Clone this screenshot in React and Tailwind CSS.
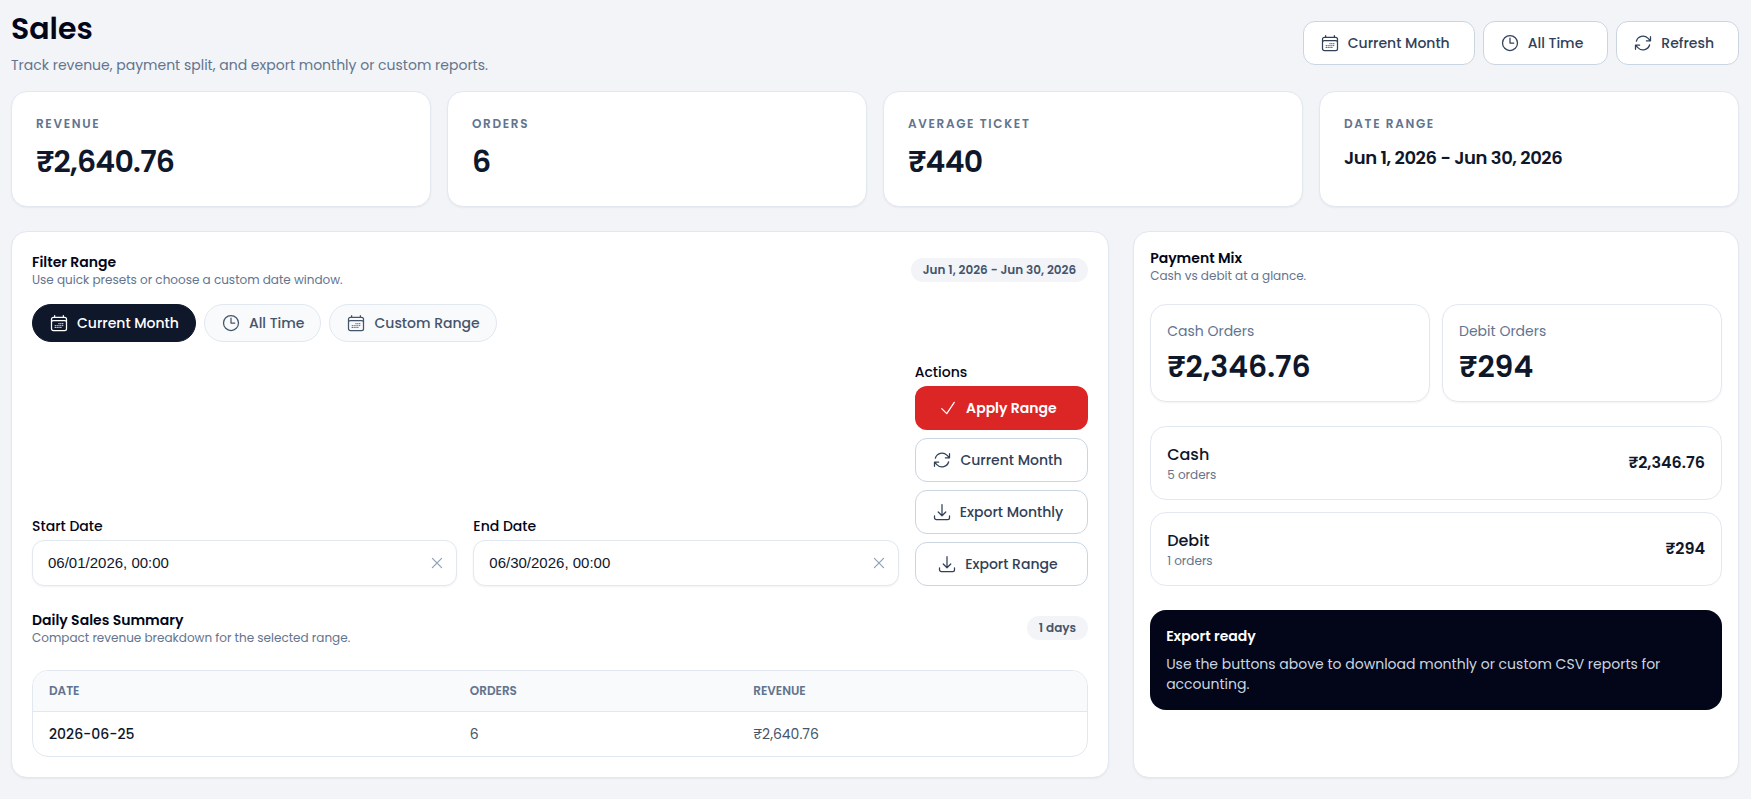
import { useId, useState } from 'react';

const RANGE_LABEL = 'Jun 1, 2026 - Jun 30, 2026';

const STATS = [
  { label: 'Revenue', value: '₹2,640.76' },
  { label: 'Orders', value: '6' },
  { label: 'Average ticket', value: '₹440' },
  { label: 'Date range', value: RANGE_LABEL, small: true },
];

const PAYMENTS = [
  { id: 'cash', label: 'Cash', orders: 5, total: '₹2,346.76' },
  { id: 'debit', label: 'Debit', orders: 1, total: '₹294' },
];

const DAILY = [{ date: '2026-06-25', orders: 6, revenue: '₹2,640.76' }];

const Svg = ({ d }) => (
  <svg viewBox="0 0 24 24" fill="none" stroke="currentColor" strokeWidth="1.5" strokeLinecap="round" strokeLinejoin="round"
    className="size-5 shrink-0" aria-hidden="true">
    <path d={d} />
  </svg>
);

const CalendarIcon = () => (
  <Svg d="M6.75 3v2.25M17.25 3v2.25M3 18.75V7.5a2.25 2.25 0 0 1 2.25-2.25h13.5A2.25 2.25 0 0 1 21 7.5v11.25m-18 0A2.25 2.25 0 0 0 5.25 21h13.5A2.25 2.25 0 0 0 21 18.75m-18 0v-7.5A2.25 2.25 0 0 1 5.25 9h13.5A2.25 2.25 0 0 1 21 11.25v7.5m-9-6h.008v.008H12v-.008ZM12 15h.008v.008H12V15Zm0 2.25h.008v.008H12v-.008ZM9.75 15h.008v.008H9.75V15Zm0 2.25h.008v.008H9.75v-.008ZM7.5 15h.008v.008H7.5V15Zm0 2.25h.008v.008H7.5v-.008Zm6.75-4.5h.008v.008h-.008v-.008Zm0 2.25h.008v.008h-.008V15Zm0 2.25h.008v.008h-.008v-.008Zm2.25-4.5h.008v.008H16.5v-.008Zm0 2.25h.008v.008H16.5V15Z" />
);
const ClockIcon = () => <Svg d="M12 6v6h4.5m4.5 0a9 9 0 1 1-18 0 9 9 0 0 1 18 0Z" />;
const RefreshIcon = () => (
  <Svg d="M16.023 9.348h4.992v-.001M2.985 19.644v-4.992m0 0h4.992m-4.993 0 3.181 3.183a8.25 8.25 0 0 0 13.803-3.7M4.031 9.865a8.25 8.25 0 0 1 13.803-3.7l3.181 3.182m0-4.991v4.99" />
);
const CheckIcon = () => <Svg d="m4.5 12.75 6 6 9-13.5" />;
const DownloadIcon = () => (
  <Svg d="M3 16.5v2.25A2.25 2.25 0 0 0 5.25 21h13.5A2.25 2.25 0 0 0 21 18.75V16.5M16.5 12 12 16.5m0 0L7.5 12m4.5 4.5V3" />
);
const CloseIcon = () => <Svg d="m6.5 6.5 11 11m0-11-11 11" />;

function OutlineButton({ icon: Icon, children }) {
  return (
    <button type="button" className="flex h-11 items-center justify-center gap-2 rounded-xl border border-slate-300 bg-white pr-6 pl-4 text-sm font-medium whitespace-nowrap text-slate-700 hover:bg-slate-50">
      <Icon /> {children}
    </button>
  );
}

function SectionTitle({ title, desc }) {
  return (
    <div>
      <h2 className="text-sm leading-5 font-semibold text-slate-950">{title}</h2>
      <p className="text-xs leading-4 text-slate-500">{desc}</p>
    </div>
  );
}

function Badge({ children }) {
  return <span className="rounded-full bg-[#f2f4f8] px-3 py-1 text-xs leading-4 font-semibold text-slate-600">{children}</span>;
}

function DateField({ label, initial }) {
  const id = useId();
  const [value, setValue] = useState(initial);
  return (
    <div className="min-w-0 flex-1">
      <label htmlFor={id} className="block text-sm leading-5 font-medium text-slate-950">{label}</label>
      <div className="mt-1 flex h-[46px] items-center rounded-xl border border-slate-200 bg-white pr-[9px] pl-[15px] shadow-xs">
        <input id={id} value={value} onChange={e => setValue(e.target.value)}
          className="min-w-0 flex-1 bg-transparent font-['Liberation_Sans',Arial,sans-serif] text-[15px] text-slate-900 outline-none" />
        <button type="button" aria-label={`Clear ${label}`} onClick={() => setValue('')} className="text-slate-400">
          <CloseIcon />
        </button>
      </div>
    </div>
  );
}

const PRESETS = [
  { id: 'month', label: 'Current Month', icon: CalendarIcon },
  { id: 'all', label: 'All Time', icon: ClockIcon },
  { id: 'custom', label: 'Custom Range', icon: CalendarIcon },
];

export default function App() {
  const [preset, setPreset] = useState('month');

  return (
    <main className="min-h-screen bg-[#f2f4f8] pt-[11px] pr-3 pb-5 pl-[11px] font-[Poppins,Inter,sans-serif] text-slate-950">
      {/* Header */}
      <header className="flex flex-wrap items-center justify-between gap-4">
        <div>
          <h1 className="text-3xl leading-9 font-semibold">Sales</h1>
          <p className="mt-2 text-sm leading-5 text-slate-500">Track revenue, payment split, and export monthly or custom reports.</p>
        </div>
        <div className="flex gap-2">
          <OutlineButton icon={CalendarIcon}>Current Month</OutlineButton>
          <OutlineButton icon={ClockIcon}>All Time</OutlineButton>
          <OutlineButton icon={RefreshIcon}>Refresh</OutlineButton>
        </div>
      </header>

      {/* Stats */}
      <section className="mt-4 grid grid-cols-2 gap-4 lg:grid-cols-4">
        {STATS.map(s => (
          <div key={s.label} className="min-h-29 rounded-2xl border border-slate-200 bg-white p-6 shadow-xs">
            <p className="text-xs leading-4 font-semibold tracking-[0.14em] text-slate-500 uppercase">{s.label}</p>
            <p className={s.small ? 'mt-3 text-lg leading-7 font-semibold tracking-tight text-slate-900' : 'mt-3 text-3xl leading-9 font-semibold tracking-tight text-slate-900'}>{s.value}</p>
          </div>
        ))}
      </section>

      <div className="mt-6 grid gap-6 lg:grid-cols-[1.45fr_0.8fr]">
        {/* Filters + summary */}
        <section className="rounded-2xl border border-slate-200 bg-white p-5 shadow-xs">
          <div className="flex items-center justify-between">
            <SectionTitle title="Filter Range" desc="Use quick presets or choose a custom date window." />
            <Badge>{RANGE_LABEL}</Badge>
          </div>

          <div className="mt-4 flex flex-wrap gap-2">
            {PRESETS.map(({ id, label, icon: Icon }) => (
              <button key={id} type="button" onClick={() => setPreset(id)} aria-pressed={preset === id}
                className={`flex h-[38px] items-center gap-2 rounded-full border px-4 text-sm font-medium ${preset === id ? 'border-slate-900 bg-slate-900 text-white' : 'border-slate-200 bg-slate-50 text-slate-600'}`}>
                <Icon /> {label}
              </button>
            ))}
          </div>

          <div className="mt-5 flex items-end gap-4">
            <DateField label="Start Date" initial="06/01/2026, 00:00" />
            <DateField label="End Date" initial="06/30/2026, 00:00" />
            <div>
              <p className="text-sm leading-5 font-medium">Actions</p>
              <div className="mt-1 flex flex-col gap-2">
                <button type="button" className="flex h-11 items-center justify-center gap-2 rounded-xl bg-[#dc2626] pr-6 pl-4 text-sm font-semibold text-white hover:bg-red-700">
                  <CheckIcon /> Apply Range
                </button>
                <OutlineButton icon={RefreshIcon}>Current Month</OutlineButton>
                <OutlineButton icon={DownloadIcon}>Export Monthly</OutlineButton>
                <OutlineButton icon={DownloadIcon}>Export Range</OutlineButton>
              </div>
            </div>
          </div>

          <div className="mt-6 flex items-center justify-between">
            <SectionTitle title="Daily Sales Summary" desc="Compact revenue breakdown for the selected range." />
            <Badge>{DAILY.length} days</Badge>
          </div>

          <div className="mt-6 overflow-hidden rounded-2xl border border-slate-200">
            <table className="w-full text-left">
              <thead className="border-b border-slate-200 bg-slate-50 text-xs leading-4 text-slate-500 uppercase">
                <tr>
                  <th className="px-4 py-3 font-semibold">Date</th>
                  <th className="px-4 py-3 font-semibold">Orders</th>
                  <th className="px-4 py-3 font-semibold">Revenue</th>
                </tr>
              </thead>
              <tbody className="text-sm leading-5 text-slate-600">
                {DAILY.map(d => (
                  <tr key={d.date}>
                    <td className="px-4 py-3 font-medium text-slate-900">{d.date}</td>
                    <td className="px-4 py-3">{d.orders}</td>
                    <td className="px-4 py-3">{d.revenue}</td>
                  </tr>
                ))}
              </tbody>
            </table>
          </div>
        </section>

        {/* Payment mix */}
        <section className="rounded-2xl border border-slate-200 bg-white p-4 shadow-xs">
          <SectionTitle title="Payment Mix" desc="Cash vs debit at a glance." />

          <div className="mt-5 grid grid-cols-2 gap-3">
            {PAYMENTS.map(p => (
              <div key={p.id} className="rounded-2xl border border-slate-200 p-4 shadow-xs">
                <p className="text-sm leading-5 text-slate-500">{p.label} Orders</p>
                <p className="mt-2 text-3xl leading-9 font-semibold text-slate-900">{p.total}</p>
              </div>
            ))}
          </div>

          <div className="mt-6 space-y-3">
            {PAYMENTS.map(p => (
              <div key={p.id} className="flex items-center justify-between rounded-2xl border border-slate-200 p-4">
                <div>
                  <p className="text-base leading-6 font-medium text-slate-900">{p.label}</p>
                  <p className="text-xs leading-4 text-slate-500">{p.orders} orders</p>
                </div>
                <p className="text-base font-semibold text-slate-900">{p.total}</p>
              </div>
            ))}
          </div>

          <div className="mt-6 rounded-2xl bg-slate-950 p-4 text-sm leading-5">
            <p className="font-semibold text-white">Export ready</p>
            <p className="mt-2 text-slate-300">Use the buttons above to download monthly or custom CSV reports for accounting.</p>
          </div>
        </section>
      </div>
    </main>
  );
}
